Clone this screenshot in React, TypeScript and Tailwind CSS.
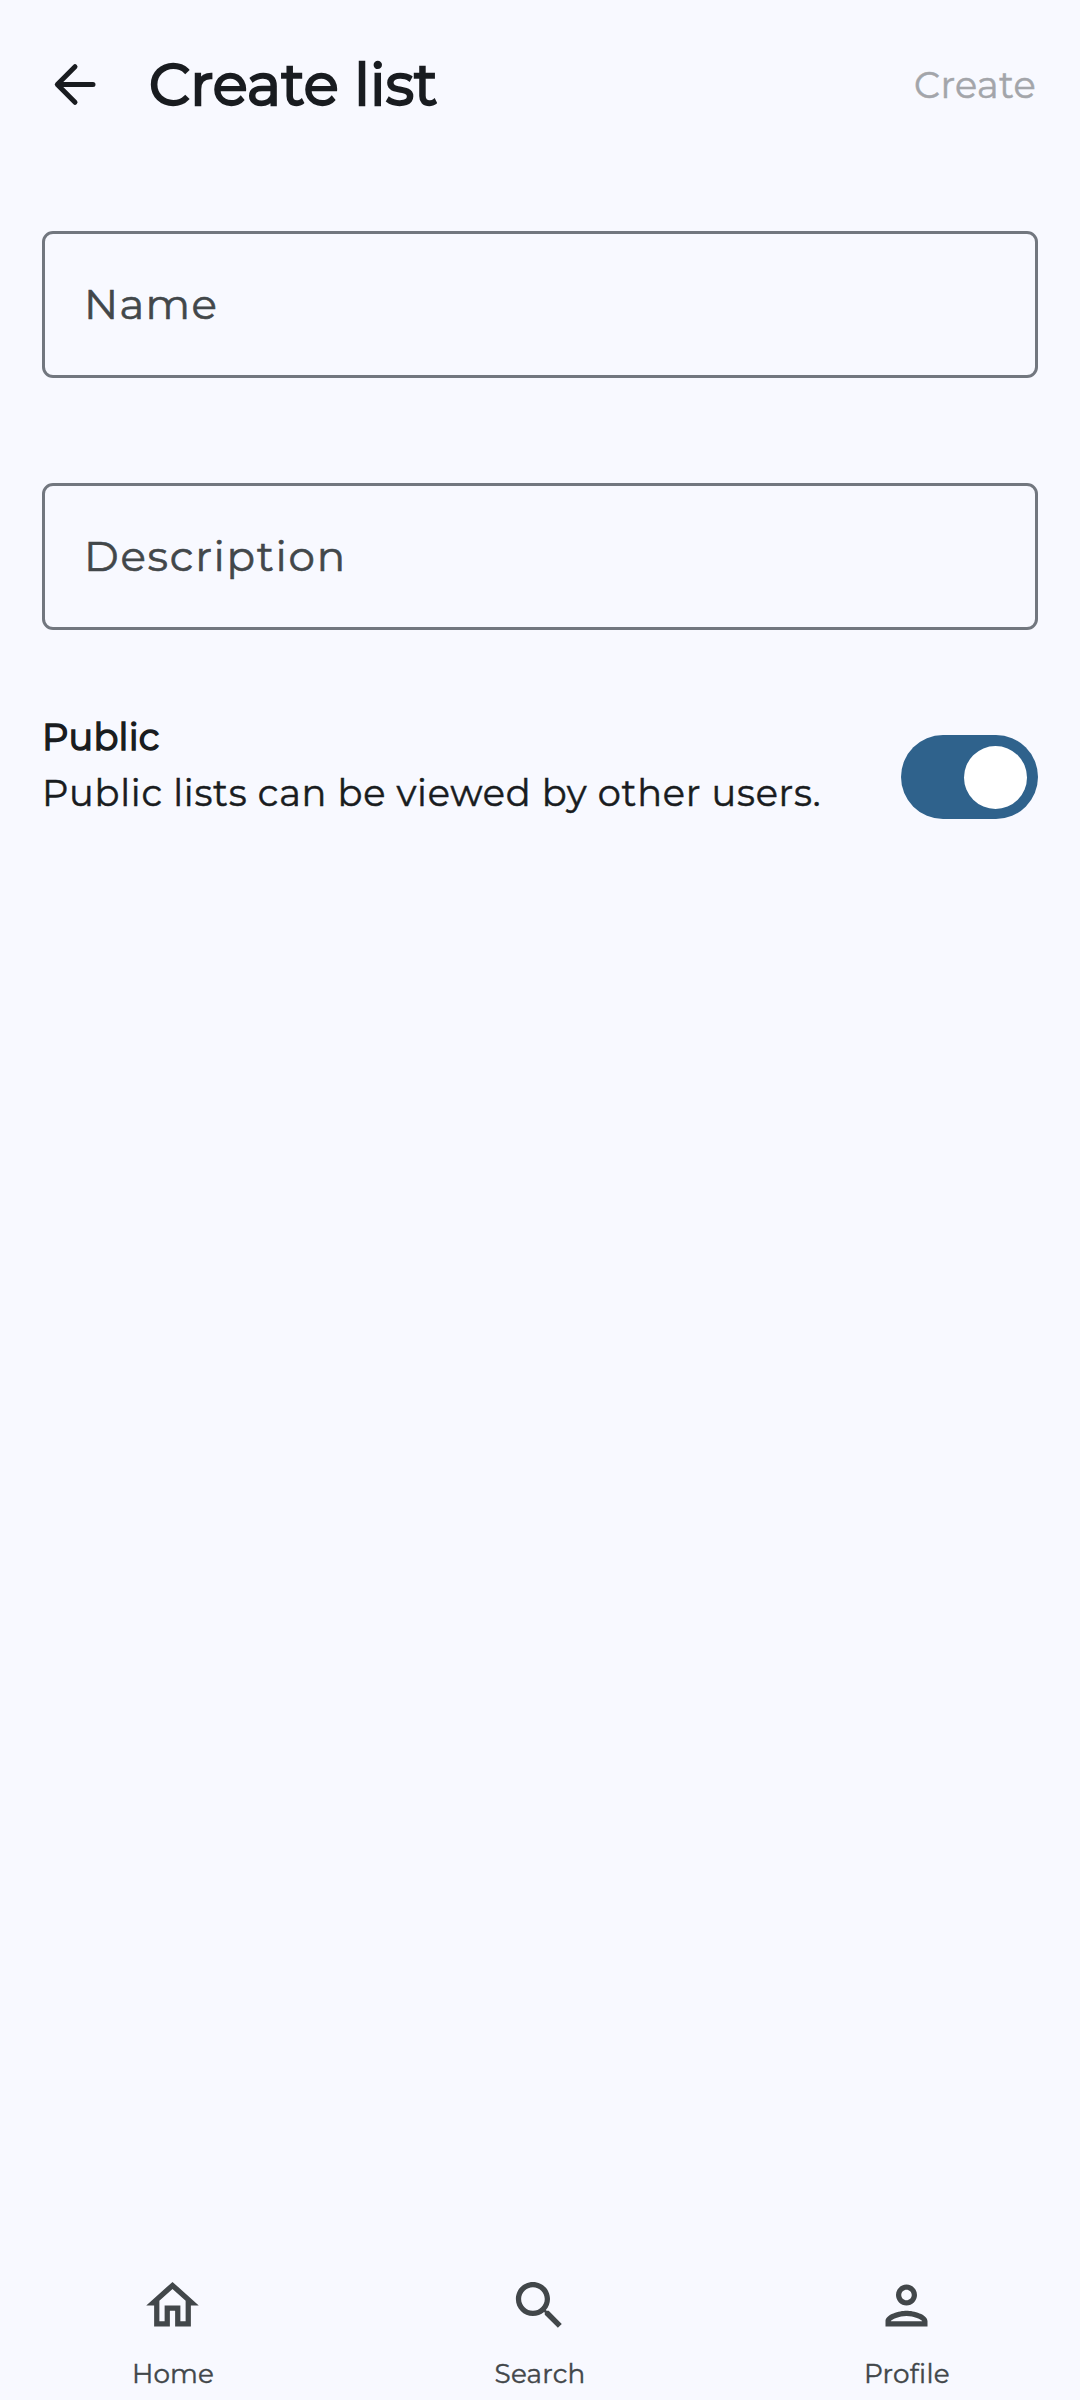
import type { ReactNode } from "react";

function Field({ label, spacing }: { label: string; spacing: string }) {
  return (
    <div className="flex h-[147px] items-center rounded-[11px] border-[3px] border-[#72777f] pl-[39px]">
      <span className={`text-[42px] leading-[63px] text-[#42474a] [-webkit-text-stroke:0.6px_currentColor] ${spacing}`}>{label}</span>
    </div>
  );
}

function NavItem({ label, spacing, children }: { label: string; spacing: string; children: ReactNode }) {
  return (
    <div className="flex flex-1 flex-col items-center text-[#42474a]">
      <svg viewBox="0 0 24 24" className="mr-[2px] size-[63px]" fill="currentColor">
        {children}
      </svg>
      <span className={`mt-[16px] text-[26.25px] leading-[42px] [-webkit-text-stroke:0.4px_currentColor] ${spacing}`}>{label}</span>
    </div>
  );
}

export default function App() {
  return (
    <div className="flex h-[2400px] w-[1080px] flex-col bg-[#f8f9ff] font-['Montserrat','Inter',sans-serif] font-normal text-[#191c20]">
      <header className="flex h-[168px] items-center justify-between px-[42px]">
        <div className="flex items-center">
          <svg viewBox="0 0 63 63" className="mt-px size-[63px]" fill="none" stroke="currentColor" strokeWidth="5" strokeLinecap="round" strokeLinejoin="round">
            <path d="M51 31.5H15.5M33 13.7L15.3 31.5L33 49.3" />
          </svg>
          <h1 className="ml-[44px] text-[57.75px] leading-[74px] tracking-[0.2px] [-webkit-text-stroke:2.4px_currentColor]">Create list</h1>
        </div>
        <button className="mt-[2px] mr-[2px] text-[36.75px] leading-[52px] tracking-[0.3px] text-[#a3a5aa] [-webkit-text-stroke:0.5px_currentColor]">Create</button>
      </header>

      <main className="flex flex-1 flex-col px-[42px] pt-[63px]">
        <Field label="Name" spacing="tracking-[1.3px]" />
        <div className="mt-[105px]">
          <Field label="Description" spacing="tracking-[1.75px]" />
        </div>
        <div className="mt-[81px] flex items-start justify-between">
          <div className="flex flex-col">
            <span className="text-[36.75px] leading-[52px] tracking-[0.2px] [-webkit-text-stroke:1.5px_currentColor]">Public</span>
            <span className="text-[36.75px] leading-[60px] tracking-[0.73px] [-webkit-text-stroke:0.5px_currentColor]">Public lists can be viewed by other users.</span>
          </div>
          <div className="mt-[24px] flex h-[84px] w-[137px] items-center justify-end rounded-full bg-[#2f628c] pr-[11px]">
            <div className="size-[63px] rounded-full bg-white" />
          </div>
        </div>
      </main>

      <nav className="flex h-[126px] gap-[21px]">
        <NavItem label="Home" spacing="tracking-[0.1px]">
          <path d="M12 5.69l5 4.5V18h-2v-6H9v6H7v-7.81l5-4.5M12 3L2 12h3v8h6v-6h2v6h6v-8h3L12 3z" />
        </NavItem>
        <NavItem label="Search" spacing="tracking-[0.2px]">
          <path d="M15.5 14h-.79l-.28-.27C15.41 12.59 16 11.11 16 9.5 16 5.91 13.09 3 9.5 3S3 5.91 3 9.5 5.91 16 9.5 16c1.61 0 3.09-.59 4.23-1.57l.27.28v.79l5 4.99L20.49 19l-4.99-5zm-6 0C7.01 14 5 11.99 5 9.5S7.01 5 9.5 5 14 7.01 14 9.5 11.99 14 9.5 14z" />
        </NavItem>
        <NavItem label="Profile" spacing="tracking-[0.3px]">
          <path d="M12 6c1.1 0 2 .9 2 2s-.9 2-2 2-2-.9-2-2 .9-2 2-2m0 10c2.7 0 5.8 1.29 6 2H6c.23-.72 3.31-2 6-2m0-12C9.79 4 8 5.79 8 8s1.79 4 4 4 4-1.79 4-4-1.79-4-4-4zm0 10c-2.67 0-8 1.34-8 4v2h16v-2c0-2.66-5.33-4-8-4z" />
        </NavItem>
      </nav>
    </div>
  );
}
